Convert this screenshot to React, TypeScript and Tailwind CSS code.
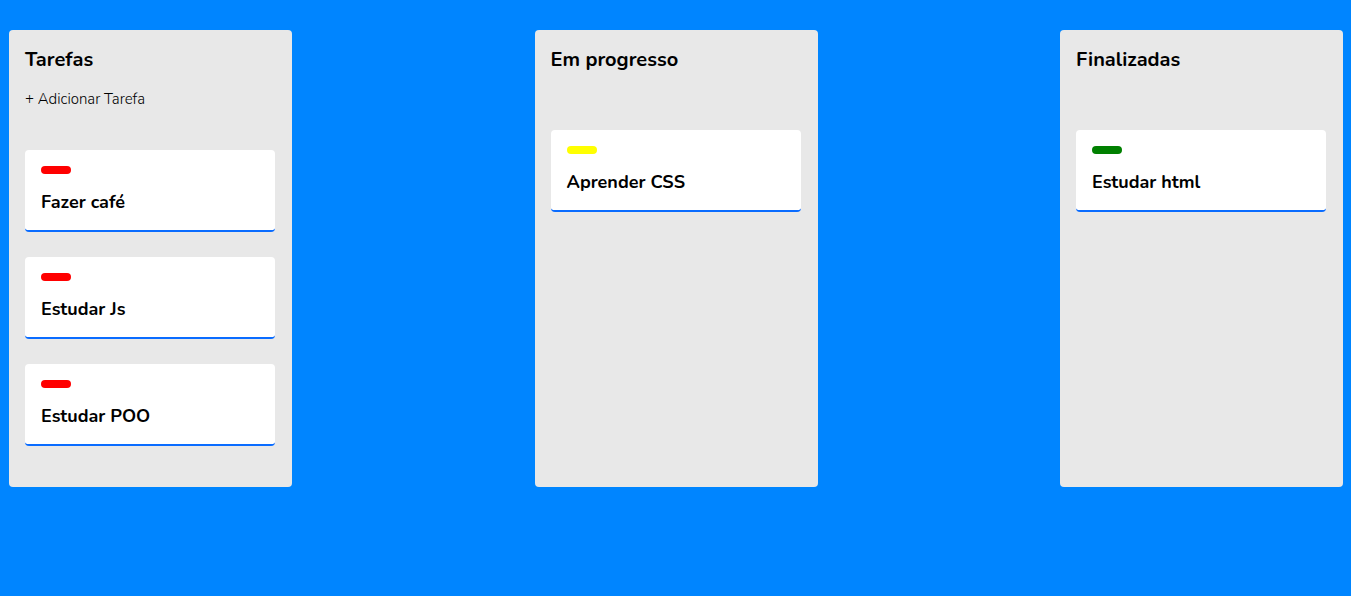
const columns = [
  {
    title: 'Tarefas',
    canAdd: true,
    tasks: [
      { id: 1, text: 'Fazer café', tag: 'bg-[#ff0000]' },
      { id: 2, text: 'Estudar Js', tag: 'bg-[#ff0000]' },
      { id: 3, text: 'Estudar POO', tag: 'bg-[#ff0000]' },
    ],
  },
  {
    title: 'Em progresso',
    canAdd: false,
    tasks: [{ id: 4, text: 'Aprender CSS', tag: 'bg-[#ffff00]' }],
  },
  {
    title: 'Finalizadas',
    canAdd: false,
    tasks: [{ id: 5, text: 'Estudar html', tag: 'bg-[#008000]' }],
  },
];

function TaskCard({ text, tag }: { text: string; tag: string }) {
  return (
    <div className="rounded-[4px] border-b-2 border-[#0a6cff] bg-white px-4 pt-4 pb-4">
      <div className={`h-2 w-[30px] rounded-full ${tag}`} />
      <p className="mt-4 text-[18px] leading-6 font-bold text-black">{text}</p>
    </div>
  );
}

export default function App() {
  return (
    <div
      className="flex min-h-[596px] items-start justify-between bg-[#0085ff] pt-[30px] pr-2 pl-[9px]"
      style={{ fontFamily: '"Nunito", "Noto Sans", "Lato", sans-serif' }}
    >
      {columns.map((col) => (
        <div key={col.title} className="h-[457px] w-[283px] rounded-[4px] bg-[#e8e8e8] pt-4 pr-[17px] pl-4">
          <h2 className="mt-px text-[20px] leading-[26px] font-bold text-black">{col.title}</h2>
          {col.canAdd && (
            <button type="button" className="mt-4 block h-5 text-[15px] leading-5 font-light text-black">
              + Adicionar Tarefa
            </button>
          )}
          <div className={`flex flex-col gap-[25px] ${col.canAdd ? 'mt-[41px]' : 'mt-[57px]'}`}>
            {col.tasks.map((t) => (
              <TaskCard key={t.id} text={t.text} tag={t.tag} />
            ))}
          </div>
        </div>
      ))}
    </div>
  );
}
